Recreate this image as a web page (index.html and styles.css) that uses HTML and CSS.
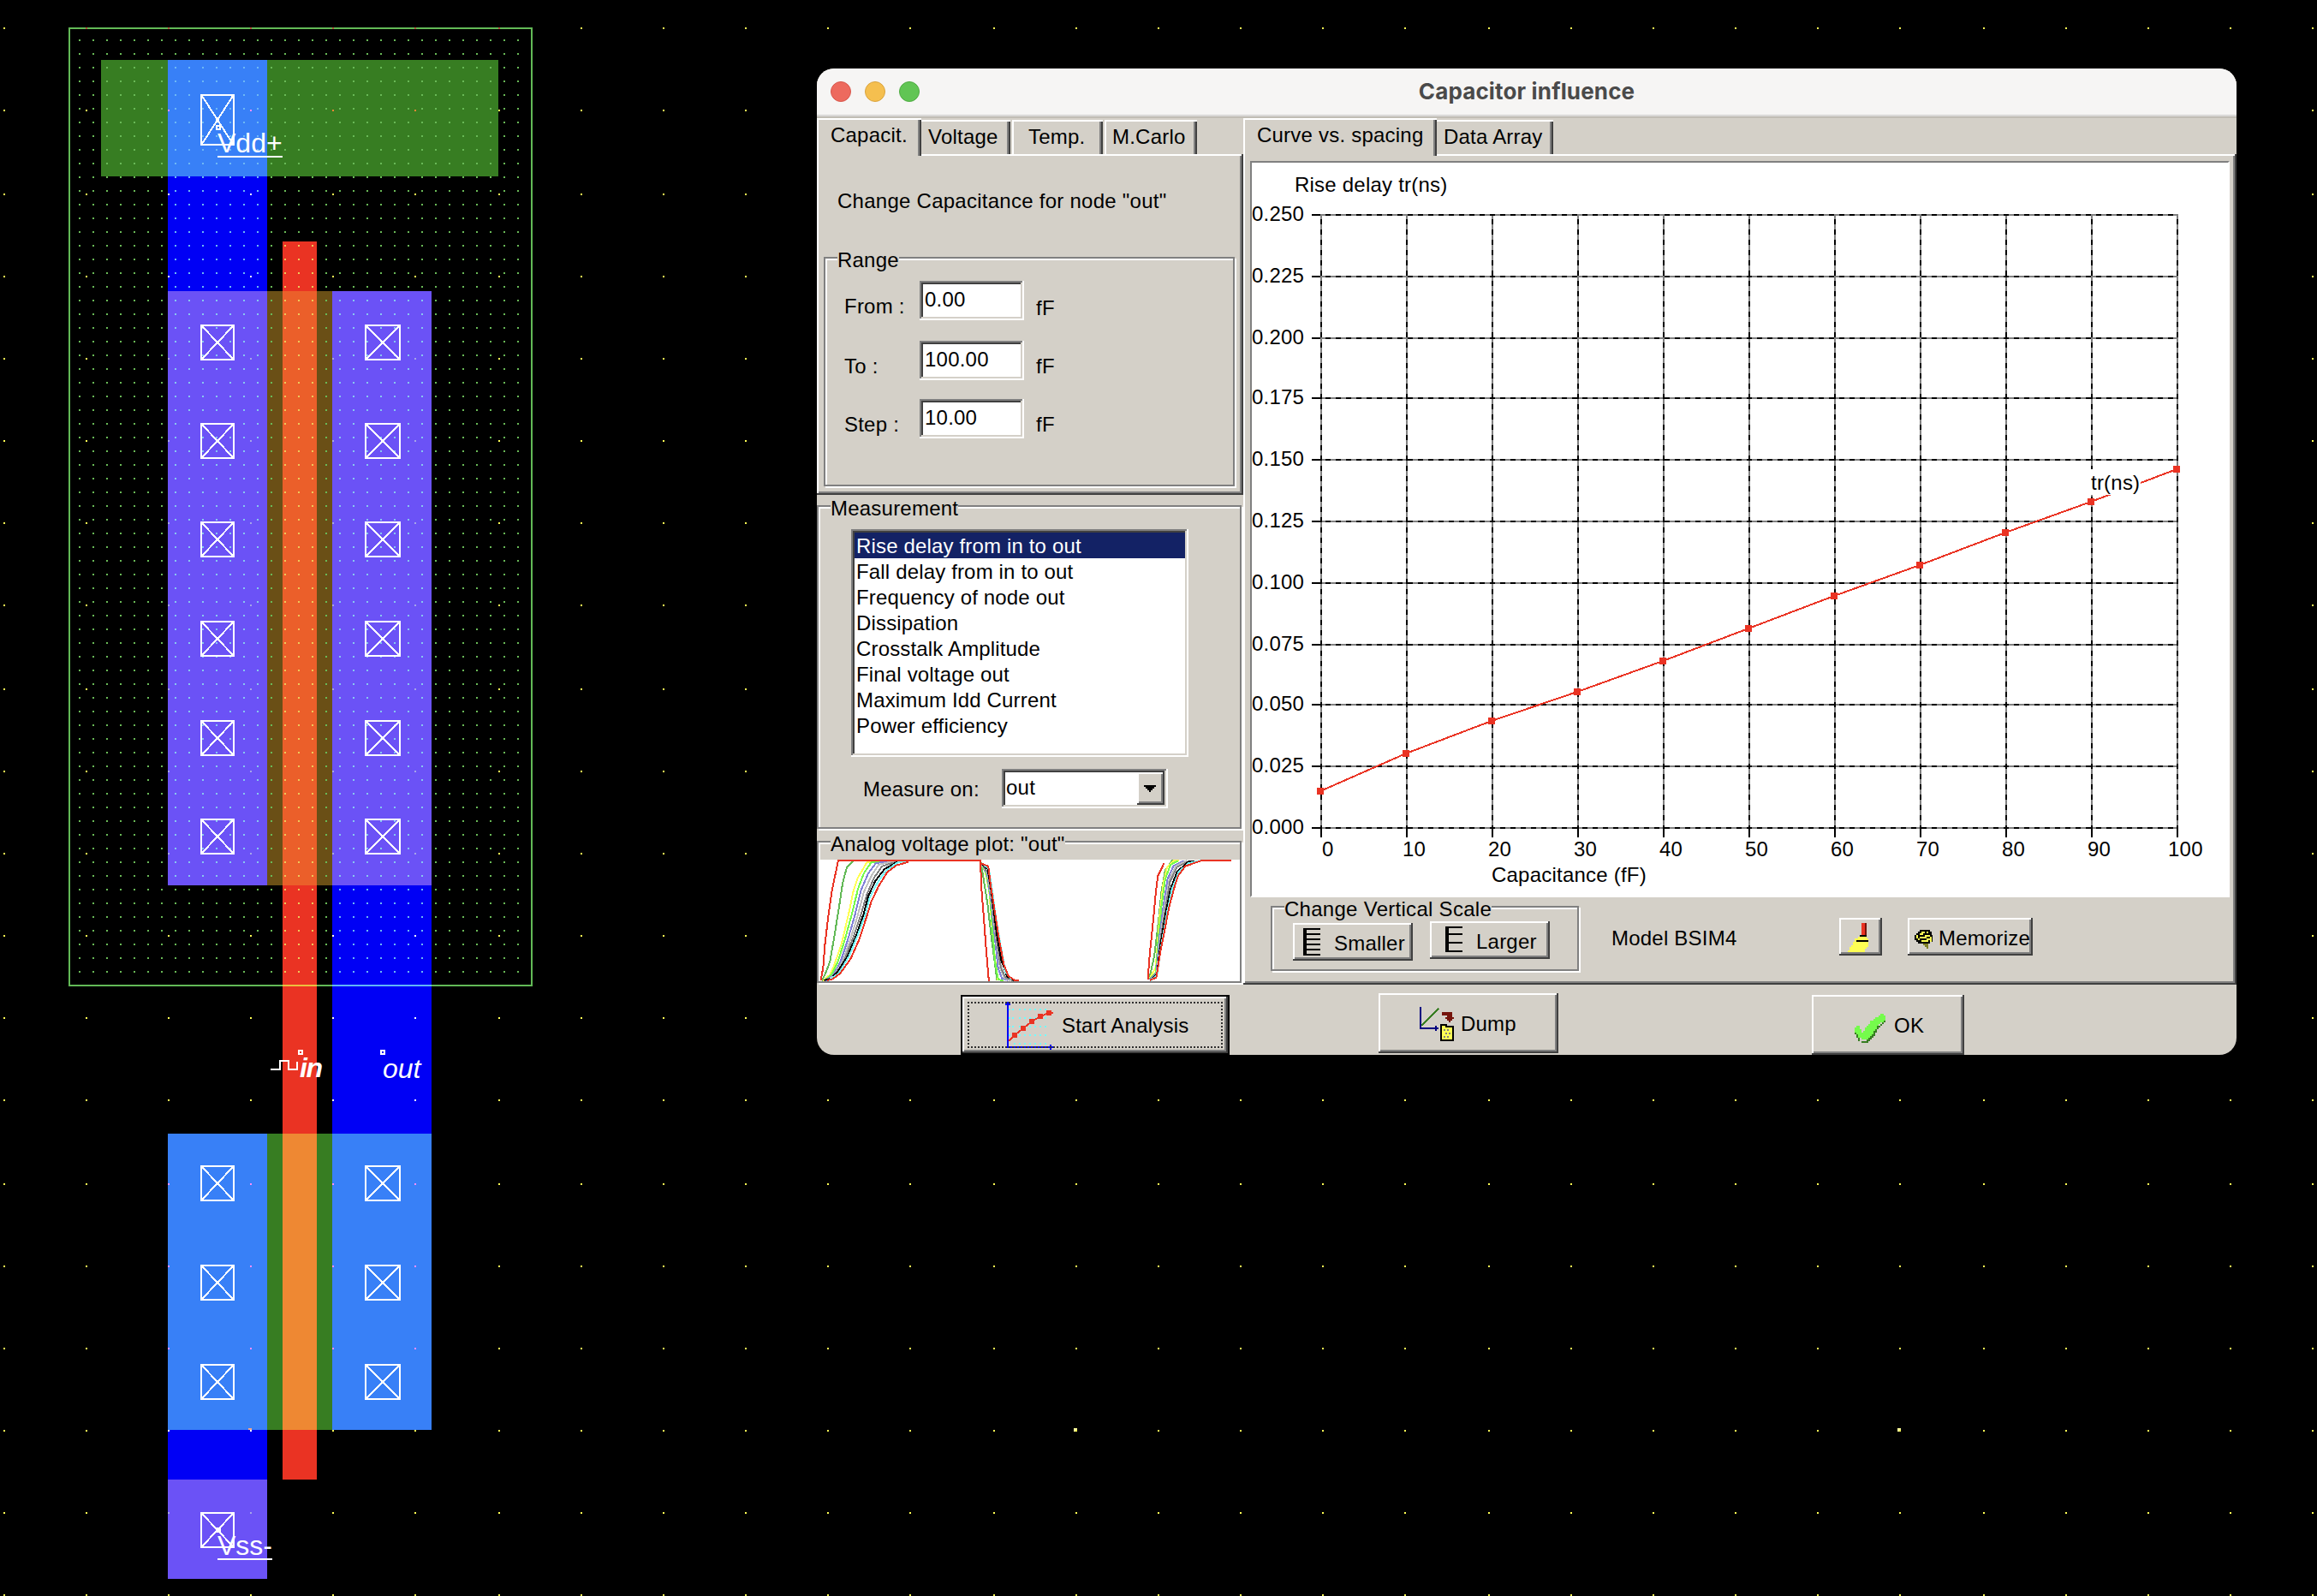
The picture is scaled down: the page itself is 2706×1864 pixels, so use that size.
FILE: index.html
```html
<!DOCTYPE html>
<html lang="en">
<head>
<meta charset="utf-8">
<title>Capacitor influence</title>
<link rel="stylesheet" href="styles.css">
</head>
<body>
<div class="desktop">
  <svg class="layout" viewBox="0 0 2706 1864" shape-rendering="crispEdges">
    <defs>
      <pattern id="well" x="92" y="46" width="16" height="16" patternUnits="userSpaceOnUse"><rect width="2" height="2" fill="#69b957"/></pattern>
      <pattern id="well-metal" x="92" y="46" width="16" height="16" patternUnits="userSpaceOnUse"><rect width="2" height="2" fill="#6db8f5"/></pattern>
      <pattern id="well-diff" x="92" y="46" width="16" height="16" patternUnits="userSpaceOnUse"><rect width="2" height="2" fill="#87c7ef"/></pattern>
      <pattern id="well-poly" x="92" y="46" width="16" height="16" patternUnits="userSpaceOnUse"><rect width="2" height="2" fill="#efc95a"/></pattern>
      <g id="via-l" fill="none" stroke="#fff" stroke-width="2"><rect x="1" y="1" width="38" height="40"/><path d="M2 2L38 40M38 2L2 40"/></g>
      <g id="via-r" fill="none" stroke="#fff" stroke-width="2"><rect x="1" y="1" width="40" height="40"/><path d="M2 2L40 40M40 2L2 40"/></g>
    </defs>
    <!-- layers -->
    <rect x="118" y="70" width="464" height="136" fill="#377d22"/>
    <rect x="196" y="70" width="116" height="136" fill="#3880f7"/>
    <rect x="196" y="206" width="116" height="134" fill="#0000f5"/>
    <rect x="196" y="340" width="116" height="694" fill="#6b52f6"/>
    <rect x="312" y="340" width="76" height="694" fill="#6a4f16"/>
    <rect x="388" y="340" width="116" height="694" fill="#6b52f6"/>
    <rect x="388" y="1034" width="116" height="290" fill="#0000f5"/>
    <rect x="330" y="282" width="40" height="1446" fill="#ea3323"/>
    <rect x="330" y="340" width="40" height="694" fill="#eb5f2a"/>
    <rect x="196" y="1324" width="116" height="346" fill="#3880f7"/>
    <rect x="312" y="1324" width="76" height="346" fill="#377d22"/>
    <rect x="330" y="1324" width="40" height="346" fill="#ee8833"/>
    <rect x="388" y="1324" width="116" height="346" fill="#3880f7"/>
    <rect x="196" y="1670" width="116" height="58" fill="#0000f5"/>
    <rect x="196" y="1728" width="116" height="116" fill="#6b52f6"/>
    <!-- n-well -->
    <rect x="92" y="46" width="514" height="1090" fill="url(#well)"/>
    <rect x="196" y="70" width="116" height="270" fill="url(#well-metal)"/>
    <rect x="196" y="340" width="116" height="694" fill="url(#well-diff)"/>
    <rect x="388" y="340" width="116" height="694" fill="url(#well-diff)"/>
    <rect x="388" y="1034" width="116" height="102" fill="url(#well-metal)"/>
    <rect x="330" y="282" width="40" height="854" fill="url(#well-poly)"/>
    <rect x="81" y="33" width="540" height="1118" fill="none" stroke="#62b956" stroke-width="2"/>
    <rect x="330" y="1150" width="40" height="2" fill="#eebf3f"/>
    <rect x="388" y="1150" width="116" height="2" fill="#61b4f7"/>
    <g id="grid"></g>
    <path fill="#ffff9a" d="M1254 1668h4v2h-2v2h-2zM2216 1668h4v2h-2v2h-2z"/>
    <path fill="#f0a58c" d="M290 1668h4v2h-4z"/>
    <!-- contacts -->
    <g fill="none" stroke="#fff" stroke-width="2"><rect x="235" y="111" width="38" height="58"/><path d="M236 112L272 168M272 112L236 168"/></g>
    <use href="#via-l" x="234" y="379"/><use href="#via-r" x="426" y="379"/>
    <use href="#via-l" x="234" y="494"/><use href="#via-r" x="426" y="494"/>
    <use href="#via-l" x="234" y="609"/><use href="#via-r" x="426" y="609"/>
    <use href="#via-l" x="234" y="725"/><use href="#via-r" x="426" y="725"/>
    <use href="#via-l" x="234" y="841"/><use href="#via-r" x="426" y="841"/>
    <use href="#via-l" x="234" y="956"/><use href="#via-r" x="426" y="956"/>
    <use href="#via-l" x="234" y="1361"/><use href="#via-r" x="426" y="1361"/>
    <use href="#via-l" x="234" y="1477"/><use href="#via-r" x="426" y="1477"/>
    <use href="#via-l" x="234" y="1593"/><use href="#via-r" x="426" y="1593"/>
    <use href="#via-l" x="234" y="1766"/>
    <!-- labels -->
    <g fill="none" stroke="#fff" stroke-width="2">
      <path d="M253 147h4v4h-4zM253 1785h4v4h-4zM349 1227h4v4h-4zM445 1227h4v4h-4z"/>
      <path d="M254 183H330M254 1821H318"/>
      <path d="M316 1249H327V1239H337V1249H347V1240"/>
    </g>
    <g class="net">
      <text x="254" y="178">Vdd+</text>
      <text x="254" y="1816">Vss-</text>
      <text x="350" y="1258" class="net-in" textLength="27">in</text>
      <text x="447" y="1259" class="net-out">out</text>
    </g>
  </svg>

  <section class="window">
    <header class="titlebar">
      <span class="light red"></span><span class="light amber"></span><span class="light green"></span>
      <h1>Capacitor influence</h1>
    </header>

    <div class="main">
      <div class="left">
        <div class="tabs">
          <span class="tab active tab-cap">Capacit.</span><span class="tab plain tab-volt">Voltage</span><span class="tab tab-temp">Temp.</span><span class="tab tab-mc">M.Carlo</span>
        </div>
        <div class="tab-body settings">
          <p>Change Capacitance for node "out"</p>
          <div class="group range">
            <span class="legend">Range</span>
            <div class="field"><label for="from">From :</label><input id="from" value="0.00"><span class="unit">fF</span></div>
            <div class="field"><label for="to">To :</label><input id="to" value="100.00"><span class="unit">fF</span></div>
            <div class="field"><label for="step">Step :</label><input id="step" value="10.00"><span class="unit">fF</span></div>
          </div>
        </div>

        <div class="group measurement">
          <span class="legend">Measurement</span>
          <ul class="list sunken">
            <li class="selected">Rise delay from in to out</li>
            <li>Fall delay from in to out</li>
            <li>Frequency of node out</li>
            <li>Dissipation</li>
            <li>Crosstalk Amplitude</li>
            <li>Final voltage out</li>
            <li>Maximum Idd Current</li>
            <li>Power efficiency</li>
          </ul>
          <div class="measure-on">
            <span class="caption">Measure on:</span>
            <div class="combo sunken"><span>out</span><i class="drop raised"><svg width="14" height="8" viewBox="0 0 14 8" shape-rendering="crispEdges"><path d="M0 0h14v2h-2v2h-2v2H8v2H6V6H4V4H2V2H0z"/></svg></i></div>
          </div>
        </div>

        <div class="group analog">
          <span class="legend">Analog voltage plot: "out"</span>
          <svg class="waves" width="490" height="142" viewBox="0 0 490 142">
            <rect width="490" height="142" fill="#fff"/>
            <g class="wave" transform="translate(-18 -44) scale(.34436 .33333)">
              <path stroke="#62b956" d="M58 556L70 530 85 490 100 400 115 305 128 215 142 160 165 136H200M597 140L603 180 620 290 632 400 645 500 652 556M1168 550L1185 470 1197 370 1210 240 1222 170 1245 136H1260"/>
              <path stroke="#ffff54" d="M62 556L85 535 100 500 125 425 150 315 165 240 180 195 210 142 240 135M598 145L612 175 625 240 635 370 645 480 655 555M1168 550L1190 510 1203 330 1215 220 1228 160 1252 135H1270"/>
              <path stroke="#75fb4c" d="M66 556L90 535 110 495 135 415 160 320 180 235 200 180 225 142 265 135M598 150L615 180 628 260 638 400 645 490 656 553 675 555M1168 552L1190 530 1198 420 1210 290 1222 200 1240 150 1265 136"/>
              <path stroke="#8080d8" d="M70 556L95 538 120 492 145 415 170 325 190 240 215 180 240 145 295 135M600 150L618 180 632 280 645 410 655 510 668 548 690 555M1170 553L1192 530 1203 400 1218 280 1230 200 1250 155 1285 136"/>
              <path stroke="#c0c0c0" d="M74 556L100 538 128 488 155 410 180 325 200 245 225 190 250 150 310 135M600 150L620 180 635 290 650 420 662 510 675 545 695 555M1170 554L1194 530 1206 400 1222 285 1235 205 1258 155 1295 136"/>
              <path stroke="#808080" d="M78 556L105 538 135 482 165 402 190 325 210 255 235 195 262 155 325 135M600 148L622 180 636 290 650 410 665 510 680 545 705 555M1172 554L1195 530 1208 400 1225 290 1238 210 1262 158 1305 136"/>
              <path stroke="#000" d="M65 555L90 548 110 525 145 470 175 395 200 320 215 260 240 205 270 165 310 142 335 135M600 146L620 165 632 240 642 320 652 400 665 480 685 540 710 555M1172 555L1194 535 1206 430 1224 320 1240 235 1262 175 1300 140 1320 136"/>
              <path stroke="#73fbfd" d="M80 555L115 530 150 470 180 395 205 325 220 265 245 215 275 170 315 142 354 135M602 146L624 165 638 260 650 350 665 440 680 525 700 552M1172 555L1194 538 1206 450 1228 320 1245 235 1268 175 1300 145 1345 135"/>
              <path stroke="#ea3323" d="M54 555L62 510 68 430 80 325 92 240 103 185 113 135H597M595 137L600 250 608 350 615 450 624 557M597 145L622 155 630 220 645 320 660 420 675 500 690 540 712 555H726M75 555L95 550 120 530 155 480 185 410 210 330 225 280 250 225 280 175 310 152 352 140M1163 552L1170 460 1180 360 1190 250 1197 190 1218 145M1170 555L1192 545 1205 460 1220 380 1235 300 1250 240 1265 190 1290 155 1345 135H1446"/>
            </g>
          </svg>
        </div>
      </div>

      <div class="right">
        <div class="tabs">
          <span class="tab active tab-curve">Curve vs. spacing</span><span class="tab plain tab-data">Data Array</span>
        </div>
        <div class="tab-body result">
          <div class="plot">
            <svg width="1140" height="856" viewBox="1462 190 1140 856" shape-rendering="crispEdges">
              <g fill="none" stroke="#808080" stroke-width="2">
                <path id="rows" d="M1542 251H2544M1542 323H2544M1542 395H2544M1542 465H2544M1542 537H2544M1542 609H2544M1542 681H2544M1542 753H2544M1542 823H2544M1542 895H2544M1542 967H2544"/>
                <path id="cols" d="M1543 250V968M1643 250V968M1743 250V968M1843 250V968M1943 250V968M2043 250V968M2143 250V968M2243 250V968M2343 250V968M2443 250V968M2543 250V968"/>
              </g>
              <g fill="none" stroke="#000" stroke-width="2">
                <use href="#rows" class="dash"/>
                <use href="#cols" class="dash"/>
                <path d="M1532 251h10M1532 323h10M1532 395h10M1532 465h10M1532 537h10M1532 609h10M1532 681h10M1532 753h10M1532 823h10M1532 895h10M1532 967h10"/>
                <path d="M1543 968v10M1643 968v10M1743 968v10M1843 968v10M1943 968v10M2043 968v10M2143 968v10M2243 968v10M2343 968v10M2443 968v10M2543 968v10"/>
              </g>
              <path fill="none" stroke="#ea3323" stroke-width="2" d="M1542 924L1642 880 1742 842 1842 808 1942 772 2042 734 2142 696 2242 660 2342 622 2442 586 2542 548"/>
              <rect x="2442" y="548" width="58" height="30" fill="#fff"/>
              <path fill="#ea3323" d="M1538 920h8v8h-8zM1638 876h8v8h-8zM1738 838h8v8h-8zM1838 804h8v8h-8zM1938 768h8v8h-8zM2038 730h8v8h-8zM2138 692h8v8h-8zM2238 656h8v8h-8zM2338 618h8v8h-8zM2438 582h8v8h-8zM2538 544h8v8h-8z"/>
              <g class="axis">
                <text x="1512" y="224">Rise delay tr(ns)</text>
                <text x="1462" y="258">0.250</text><text x="1462" y="330">0.225</text><text x="1462" y="402">0.200</text><text x="1462" y="472">0.175</text><text x="1462" y="544">0.150</text><text x="1462" y="616">0.125</text><text x="1462" y="688">0.100</text><text x="1462" y="760">0.075</text><text x="1462" y="830">0.050</text><text x="1462" y="902">0.025</text><text x="1462" y="974">0.000</text>
                <text x="1544" y="1000">0</text><text x="1638" y="1000">10</text><text x="1738" y="1000">20</text><text x="1838" y="1000">30</text><text x="1938" y="1000">40</text><text x="2038" y="1000">50</text><text x="2138" y="1000">60</text><text x="2238" y="1000">70</text><text x="2338" y="1000">80</text><text x="2438" y="1000">90</text><text x="2532" y="1000">100</text>
                <text x="1742" y="1030">Capacitance (fF)</text>
                <text x="2442" y="572">tr(ns)</text>
              </g>
            </svg>
          </div>
          <div class="tools">
            <div class="group scale">
              <span class="legend">Change Vertical Scale</span>
              <div class="scale-row">
                <button class="raised smaller"><svg width="20" height="32" viewBox="0 0 20 32" shape-rendering="crispEdges"><path d="M0 0h4v32H0zM4 0h16v2H4zM4 6h16v2H4zM4 12h16v2H4zM4 18h16v2H4zM4 24h16v2H4zM4 30h16v2H4z"/></svg><span>Smaller</span></button>
                <button class="raised larger"><svg width="20" height="30" viewBox="0 0 20 30" shape-rendering="crispEdges"><path d="M0 0h4v30H0zM4 0h16v2H4zM4 8h16v2H4zM4 18h16v2H4zM4 28h16v2H4z"/></svg><span>Larger</span></button>
              </div>
            </div>
            <span class="model">Model BSIM4</span>
            <button class="raised broom"><svg width="26" height="36" viewBox="0 0 26 36" shape-rendering="crispEdges"><path fill="#ea3323" d="M16 0h4v14h-4z"/><path fill="#75140c" d="M20 0h2v14h-2z"/><path fill="#ffff54" d="M12 16h10v2h2v10h-2v2h-2v4H0v-2h2v-4h2v-2h2v-4h2v-4h4z"/><path d="M14 14h8v2h-8zM10 20h14v2H10z"/></svg></button>
            <button class="raised memorize"><svg width="22" height="22" viewBox="0 0 22 22" shape-rendering="crispEdges"><path d="M6 0h12v2h2v4h1v8h-3v2H4v-2H2v-2H0V6h2V4h2V2h2z"/><path fill="#ffff54" d="M6 4h2V2h4v2h-2v2H6zM14 2h2v2h-2zM2 6h2v2h8V6h6v2h-4v2H6V8H4v2H2zM4 10h2v2h8v-2h4v-2h2v6h-2v-2h-2v2H8v-2H4z"/><path fill="#808026" d="M10 16h6v2h-6zM12 18h4v4h-2v-2h-2z"/></svg><span>Memorize</span></button>
          </div>
        </div>
      </div>
    </div>

    <footer class="actions">
      <button class="start"><svg width="60" height="62" viewBox="1172 1166 60 62" shape-rendering="crispEdges">
        <path fill="none" stroke="#73fbfd" stroke-width="2" stroke-dasharray="2 2" d="M1178 1179h8M1178 1189h8M1178 1199h8M1178 1209h8"/>
        <path fill="none" stroke="#73fbfd" stroke-width="2" stroke-dasharray="2 4" d="M1190 1179h36M1190 1189h36M1190 1199h36M1190 1209h36M1184 1219h42"/>
        <path fill="#0000f5" d="M1176 1170h2v54h-2zM1174 1172h6v2h-6z"/>
        <path fill="#ffff54" d="M1178 1222h48v2h-48z"/>
        <path fill="none" stroke="#0000f5" stroke-width="2" stroke-dasharray="2 2" d="M1180 1223h44"/>
        <path fill="#0000f5" d="M1226 1220h2v2h-2zM1226 1224h2v2h-2zM1224 1222h2v2h-2zM1228 1222h2v2h-2z"/>
        <path fill="none" stroke="#ea3323" stroke-width="2" d="M1178 1216L1185 1209 1195 1201 1205 1193 1215 1187 1225 1183H1230"/>
        <path fill="#ea3323" d="M1182 1206h6v6h-6zM1192 1198h6v6h-6zM1202 1190h6v6h-6zM1212 1184h6v6h-6zM1222 1180h6v6h-6z"/></svg><span>Start Analysis</span></button>
      <button class="raised dump"><svg width="40" height="40" viewBox="1658 1176 40 40" shape-rendering="crispEdges">
        <path fill="#000080" d="M1658 1176h2v24h16v-2h2v2h2v2h-2v2h-2v-2h-18z"/>
        <path fill="none" stroke="#377d22" stroke-width="2" d="M1660 1198L1680 1178"/>
        <path fill="#75140c" d="M1684 1182h12v6h2v2h-2v2h-2v2h-2v-2h-2v-2h-2v-2h2v-2h-6z"/>
        <path d="M1682 1196h8v2h8v18h-16z"/><path fill="#ffff54" d="M1684 1198h4v2h8v14h-12z"/>
        <path fill="none" stroke="#808080" stroke-width="2" stroke-dasharray="2 2" d="M1686 1203h8M1688 1207h8M1686 1211h8"/></svg><span>Dump</span></button>
      <button class="raised ok"><svg width="36" height="34" viewBox="0 0 36 34" shape-rendering="crispEdges">
        <path fill="#377d22" d="M0 18h2v6h2v4h2v4h8v-2h2v-2h2v-4h2v-2h2v-4h2v-2h2v-2h4v-2h2V8h4v2h-2v2h-2v2h-2v2h-2v2h-2v4h-2v4h-2v2h-2v2h-2v2h-2v2H8v-2H4v-4H2v-4H0z"/>
        <path fill="#75fb4c" d="M0 16h2v-2h4v4h2v4h2v-2h2v-4h2v-2h2v-2h2v-4h2V8h2V6h2V4h4V2h2V0h4v2h2v6h-2v2h-4v2h-2v2h-2v4h-2v2h-2v4h-2v2h-2v2h-2v2H8v-2H4v-4H2v-2H0z"/></svg><span>OK</span></button>
    </footer>
  </section>
</div>
<script src="grid.js"></script>
</body>
</html>
```

FILE: styles.css
```css
* { box-sizing: border-box; margin: 0; padding: 0; }

:root {
  --face: #d4d0c8;
  --gray: #808080;
  --dark: #404040;
}

body {
  background: #000;
  font: 24px/28px "Liberation Sans", Arial, sans-serif;
  letter-spacing: .22px;
  color: #000;
}

svg { display: block; flex: none; }
button { font: inherit; letter-spacing: inherit; color: inherit; border: 0; text-align: left; }
span, label, p, li { white-space: nowrap; }

.desktop { position: relative; width: 2706px; height: 1864px; overflow: hidden; }
.layout { width: 2706px; height: 1864px; }
.net { font-size: 32px; letter-spacing: 0; fill: #fff; }
.net-in { font-weight: bold; font-style: italic; }
.net-out { font-style: italic; }

/* window frame */
.window {
  position: absolute;
  left: 954px;
  top: 80px;
  width: 1658px;
  height: 1152px;
  border-radius: 20px;
  overflow: hidden;
  background: var(--face);
  display: flex;
  flex-direction: column;
}
.titlebar {
  height: 56px;
  flex: none;
  display: flex;
  align-items: center;
  gap: 16px;
  padding: 0 16px 2px;
  background: #f6f5f4;
  border-bottom: 1px solid #e8e7e5;
  box-shadow: inset 0 -1px #cfcecc, 0 1px #b3b0a8, 0 2px #c8c4bb;
  position: relative;
}
.titlebar h1 {
  flex: 1;
  margin-right: 120px;
  text-align: center;
  font: bold 26px/30px Inter, sans-serif;
  letter-spacing: .15px;
  color: #4a4a4a;
}
.light { width: 24px; height: 24px; border-radius: 50%; border: 1px solid; }
.red { background: #ed6a5e; border-color: #d8574c; }
.amber { background: #f5bf4f; border-color: #d9a33d; }
.green { background: #61c554; border-color: #4fab42; }

/* bevels */
.raised { background: var(--face); box-shadow: inset -2px -2px var(--dark), inset 2px 2px #fff, inset -4px -4px var(--gray); }
.sunken, input { background: #fff; box-shadow: inset -2px -2px #fff, inset 2px 2px var(--gray), inset -4px -4px var(--face), inset 4px 4px var(--dark); }
.group { border: 2px solid var(--gray); box-shadow: 2px 2px #fff, inset 2px 2px #fff; }
.legend { display: table; margin-top: -12px; background: var(--face); }

/* panes */
.main { display: grid; grid-template-columns: 498px 1160px; height: 1014px; flex: none; }
.left, .right { display: flex; flex-direction: column; }
.tabs { display: flex; align-items: flex-end; height: 44px; flex: none; }
.tab { height: 40px; padding-top: 6px; box-shadow: inset 2px 2px #fff, inset -2px 0 var(--dark), inset -4px 0 var(--gray); }
.tab.plain { box-shadow: inset 0 2px #fff, inset -2px 0 var(--dark), inset -4px 0 var(--gray); }
.tab.active { height: 44px; margin-bottom: -2px; background: var(--face); position: relative; }
.tab-cap { width: 122px; padding-left: 16px; }
.tab-volt { width: 104px; padding-left: 8px; }
.tab-temp { width: 106px; margin-left: 2px; padding-left: 19px; }
.tab-mc { width: 108px; margin-left: 2px; padding-left: 9px; }
.tab-curve { width: 226px; padding-left: 16px; }
.tab-data { width: 136px; padding-left: 8px; }
.tab-body { box-shadow: inset -2px -2px var(--dark), inset 2px 2px #fff, inset -4px -4px var(--gray); }

.settings { height: 398px; padding: 41px 0 0 8px; }
.settings p { padding-left: 16px; letter-spacing: .26px; }
.range { width: 480px; height: 268px; margin-top: 51px; }
.range .legend { margin-left: 14px; margin-bottom: 10px; }
.field { display: flex; align-items: flex-start; height: 68px; }
.field:nth-of-type(1) { height: 70px; }
.field label { width: 110px; padding: 16px 0 0 22px; }
.field .unit { padding: 16px 0 0 14px; }
.field:nth-of-type(1) .unit { padding-top: 18px; }
input { width: 122px; height: 46px; border: 0; font: inherit; letter-spacing: inherit; padding: 8px 6px 10px 6px; }

.measurement { width: 496px; height: 378px; margin-top: 12px; }
.measurement .legend { margin-left: 14px; }
.list { list-style: none; width: 394px; height: 266px; margin: 10px 0 14px 38px; padding: 4px; letter-spacing: .16px; }
.list li { height: 30px; padding: 2px 0 0 2px; }
.list .selected { background: #132265; color: #fff; }
.measure-on { display: flex; align-items: flex-start; }
.caption { width: 214px; padding: 10px 0 0 52px; }
.combo { display: flex; justify-content: space-between; width: 194px; height: 46px; padding: 4px; }
.combo span { padding: 4px 0 0 1px; }
.drop { width: 32px; height: 38px; display: flex; align-items: center; justify-content: center; padding-right: 2px; }

.analog { width: 496px; height: 166px; margin-top: 14px; }
.analog .legend { margin-left: 14px; margin-bottom: 4px; }
.waves { margin-left: 2px; }
.wave path { fill: none; stroke-width: 2px; vector-effect: non-scaling-stroke; shape-rendering: crispEdges; }

.result { flex: 1; padding: 8px; }
.plot { width: 1144px; height: 860px; background: #fff; border: 2px solid #fff; border-top-color: var(--gray); border-left-color: var(--gray); }
.dash { stroke-dasharray: 6 6; stroke-dashoffset: 6; }
.axis { fill: #000; }

.tools { display: flex; align-items: flex-start; padding-left: 24px; }
.scale { width: 360px; height: 76px; margin-top: 10px; }
.scale .legend { margin-left: 14px; letter-spacing: .28px; }
.scale-row { display: flex; align-items: flex-start; gap: 20px; padding-left: 24px; }
.tools button, .actions button { display: flex; align-items: flex-start; overflow: hidden; flex: none; }
.smaller { width: 140px; height: 44px; margin-top: 2px; padding: 6px 0 0 12px; gap: 16px; }
.larger { width: 140px; height: 44px; padding: 6px 0 0 18px; gap: 16px; }
.smaller span, .larger span { margin-top: 4px; }
.model { width: 304px; padding: 34px 0 0 38px; }
.broom { width: 50px; height: 44px; margin-top: 24px; padding: 6px 0 0 10px; }
.memorize { width: 146px; height: 44px; margin: 24px 0 0 30px; padding: 10px 0 0 8px; gap: 6px; }
.memorize svg { margin-top: 4px; }

.actions { display: flex; align-items: flex-start; flex: 1; padding-left: 168px; }
.actions .start {
  position: relative;
  width: 314px;
  height: 70px;
  margin-top: 12px;
  padding: 2px 0 0 48px;
  gap: 8px;
  border: 2px solid #000;
  background: var(--face);
  box-shadow: inset -2px -2px var(--dark), inset 2px 2px #fff, inset -4px -4px var(--gray);
}
.start::after {
  content: "";
  position: absolute;
  inset: 6px;
  background:
    repeating-linear-gradient(90deg, #303030 0 2px, transparent 2px 4px) top / 100% 2px no-repeat,
    repeating-linear-gradient(90deg, #303030 0 2px, transparent 2px 4px) bottom / 100% 2px no-repeat,
    repeating-linear-gradient(#303030 0 2px, transparent 2px 4px) left / 2px 100% no-repeat,
    repeating-linear-gradient(#303030 0 2px, transparent 2px 4px) right / 2px 100% no-repeat;
}
.start span { margin-top: 18px; }
.dump { width: 210px; height: 70px; margin: 10px 0 0 174px; padding: 16px 0 0 48px; gap: 8px; }
.dump span { margin-top: 6px; }
.ok { width: 178px; height: 70px; margin: 12px 0 0 296px; padding: 22px 0 0 50px; gap: 10px; }
```

FILE: grid.js
```js
// Reference grid dots of the layout editor, tinted by the layer beneath.
(function () {
  var grid = document.getElementById('grid');
  var layers = [
    { x: 80, y: 32, w: 542, h: 2, c: '#b4503c' },
    { x: 196, y: 70, w: 116, h: 136, c: '#ff8ef8' },
    { x: 118, y: 70, w: 464, h: 136, c: '#ee8833' },
    { x: 196, y: 206, w: 116, h: 134, c: '#ffffff' },
    { x: 196, y: 340, w: 116, h: 694, c: '#a5a5e8' },
    { x: 388, y: 340, w: 116, h: 694, c: '#a5a5e8' },
    { x: 388, y: 1034, w: 116, h: 290, c: '#ffffff' },
    { x: 196, y: 1324, w: 116, h: 346, c: '#ff8ef8' },
    { x: 388, y: 1324, w: 116, h: 346, c: '#ff8ef8' },
    { x: 196, y: 1670, w: 116, h: 58, c: '#ffffff' },
    { x: 196, y: 1728, w: 116, h: 116, c: '#a5a5e8' }
  ];
  for (var r = 0; r < 20; r++) {
    var y = 2 * Math.floor(16.7 + 48.168 * r);
    for (var k = 0; k < 29; k++) {
      var x = 2 * Math.floor(2.05 + 48.168 * k);
      var hit = layers.find(function (l) {
        return x >= l.x && x < l.x + l.w && y >= l.y && y < l.y + l.h;
      });
      var dot = document.createElementNS('http://www.w3.org/2000/svg', 'rect');
      dot.setAttribute('x', x);
      dot.setAttribute('y', y);
      dot.setAttribute('width', 2);
      dot.setAttribute('height', 2);
      dot.setAttribute('fill', hit ? hit.c : '#ffff54');
      grid.appendChild(dot);
    }
  }
})();
```
